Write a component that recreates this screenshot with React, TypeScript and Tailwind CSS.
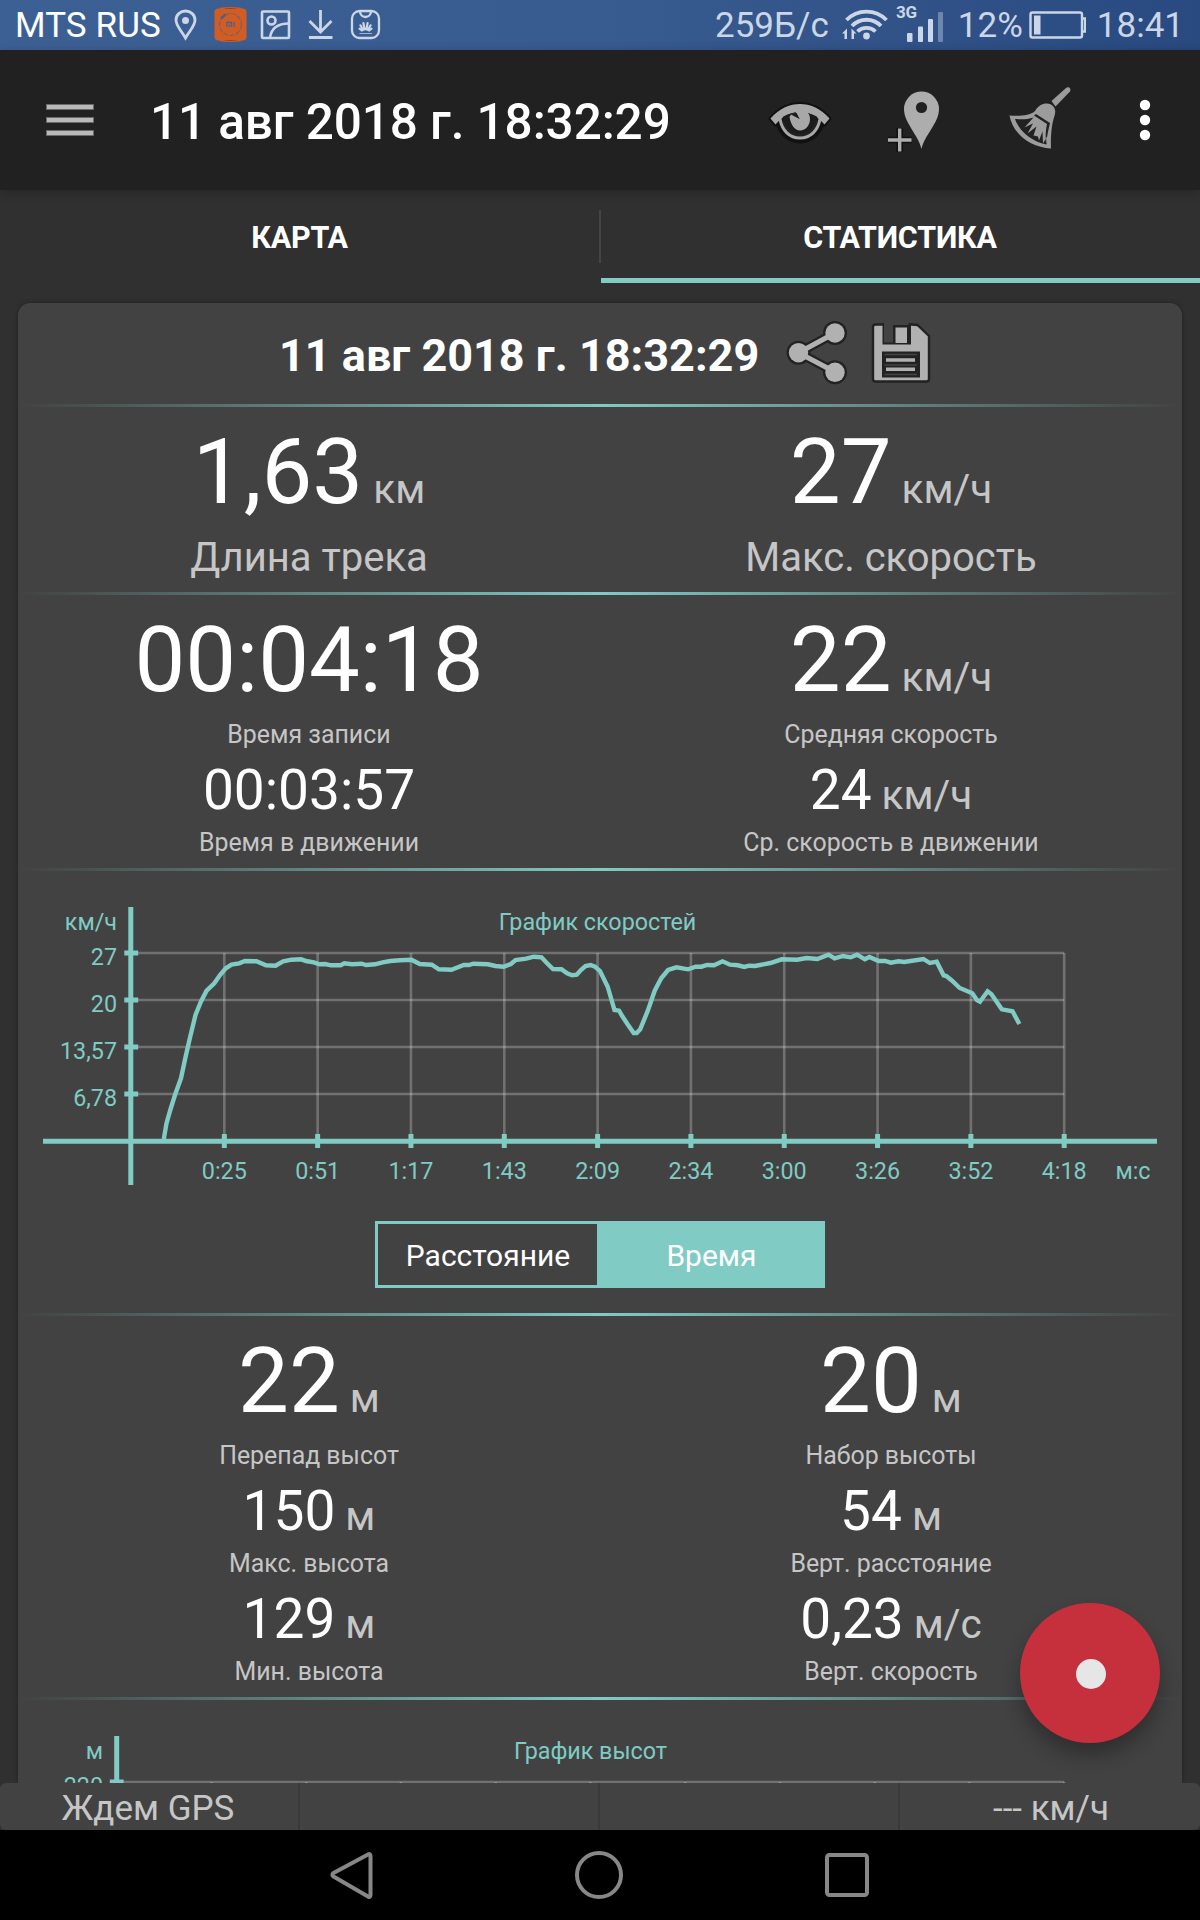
import type { ReactNode } from 'react';

const TEAL = '#80cbc4';

// Speed line, [x, y] in chart units
const speedLine: [number, number][] = [
  [163.8, 249], [166.5, 233.3], [170.3, 220], [175.3, 204], [181, 188.3], [185.6, 166.7], [190.2, 146.7],
  [195.5, 125], [200.9, 111.7], [206.6, 100.7], [214.3, 93.3], [220, 85], [225.8, 78.3], [231.5, 74.7],
  [239.2, 73.3], [244.9, 71], [256.4, 71.3], [266, 75.3], [275.5, 75.7], [283.2, 71.3], [291.6, 69.7],
  [301.2, 69.3], [306.1, 71], [313.8, 72.3], [319.5, 74.3], [325.3, 74], [331, 75.3], [340.6, 75.3],
  [344.4, 73.3], [352, 74.3], [361.6, 73.7], [366.2, 75], [375, 74.3], [382.7, 72.3], [390.3, 71],
  [399.9, 70.3], [411.4, 69.7], [419.8, 74], [431.7, 74.7], [438.9, 79.3], [451.5, 79.7], [463.8, 75],
  [468.8, 75], [473.4, 73.7], [487.9, 74.3], [495.5, 76], [503.6, 76.7], [510.9, 74], [515.5, 70],
  [526.2, 68.7], [533.8, 66.7], [541.5, 67.3], [546.1, 72.3], [553, 79], [561.4, 79.3], [567.1, 83.3],
  [572.1, 85.3], [576.7, 84.7], [580.9, 80], [585.5, 76], [590.5, 75], [595, 76.7], [600, 81],
  [607.7, 96.7], [614.5, 120], [619.1, 120.7], [622.2, 126], [627.6, 134.3], [633.7, 143], [636.7, 143],
  [640.2, 139.3], [647.8, 120.7], [654.7, 100.7], [661.2, 88.3], [668.1, 80], [676.5, 77.3], [688, 79.3],
  [695.7, 76.7], [701.4, 76.7], [707.1, 75], [714, 75.3], [722.5, 71.3], [730.1, 74.7], [737.8, 75.3],
  [744.3, 77], [749.2, 75.7], [755, 76], [770.3, 73], [781.8, 69.3], [797.1, 69.7], [806.6, 68],
  [817.4, 69], [828.5, 64.7], [834.6, 68.3], [843, 66], [850.7, 67.3], [857.2, 64.7], [864.8, 69.3],
  [869.4, 67], [878.6, 71], [885.1, 71], [890.8, 72.7], [898.5, 71.3], [904.2, 72], [923.4, 69],
  [929.9, 73], [936.7, 71.7], [943.6, 85.3], [946.3, 86], [952.1, 90.7], [959.7, 98], [972.3, 103.3],
  [976.9, 110], [980, 111.7], [987.6, 101.3], [991.5, 104.3], [1001.8, 119.3], [1012.5, 121.3], [1019.4, 134],
];

const speedX = ['0:25', '0:51', '1:17', '1:43', '2:09', '2:34', '3:00', '3:26', '3:52', '4:18'];
const speedY = ['27', '20', '13,57', '6,78'];

function StatusBar() {
  return (
    <div className="flex h-[50px] shrink-0 items-center whitespace-nowrap bg-linear-to-r from-[#3d6094] via-[#385b90] to-[#294a80] text-[35px] leading-[50px] text-[#cbd6e6]">
      <span className="ml-[15px] w-[157px] pt-[2px] tracking-[0.1px] text-white">MTS RUS</span>
      <svg width="28" height="50" viewBox="172 0 28 50" fill="none" stroke="currentColor" strokeWidth="2.8">
        <path d="M185.500 38C181 30 176 26 176 20a9.500 9 0 0 1 19 0c0 6-5 10-9.500 18z" />
        <circle cx="185.500" cy="20.500" r="3.500" fill="currentColor" stroke="none" />
      </svg>
      <svg className="ml-[12px]" width="36" height="50" viewBox="212 0 36 50">
        <rect x="214.500" y="8.500" width="32" height="32" rx="4" fill="#d15d25" />
        <path d="M220 8.500Q230.500 7 241 8.500M220 40.500Q230.500 42 241 40.500" stroke="#d15d25" strokeWidth="1.500" />
        <circle cx="230.500" cy="24.500" r="11" fill="none" stroke="#7a5f61" strokeWidth="1.200" strokeDasharray="5 1.500" />
        <path d="M221 18.500l4.500-4" stroke="#4a6190" strokeWidth="2.400" />
        <path d="M227 27v-4.500h4.500V27M229.300 24.500V27M234 22v5" fill="none" stroke="#4a6190" strokeWidth="1.300" />
      </svg>
      <svg className="ml-[12px]" width="32" height="50" viewBox="260 0 32 50" fill="none" stroke="currentColor" strokeWidth="2.600">
        <rect x="262" y="11.500" width="27" height="26.500" rx="1" />
        <circle cx="271.500" cy="20.500" r="4" />
        <path d="M270 38c1-9 7-14.500 19-14.500" />
      </svg>
      <svg className="ml-[15px]" width="28" height="50" viewBox="307 0 28 50" fill="none" stroke="currentColor" strokeWidth="2.800">
        <path d="M320.500 10v21M309.500 21l11 11 11-11M309 37.500h23.500" />
      </svg>
      <svg className="ml-[14px]" width="34" height="50" viewBox="349 0 34 50" fill="none" stroke="currentColor" strokeWidth="2.300">
        <rect x="352" y="11" width="27" height="27" rx="7.500" />
        <path d="M360 11c0 8 11 8 11 0" />
        <g strokeWidth="2.200" strokeLinecap="round">
          <path d="M364.600 29.500l-1.200-6.500M366.400 29.500l1.200-6.500M363 29.800l-2.600-4.500M368 29.800l2.600-4.500M361.800 30.500l-2.300-1.800M369.200 30.500l2.300-1.800" />
        </g>
        <path d="M359.500 33.500h12.500" strokeWidth="1" opacity=".7" />
      </svg>

      <span className="ml-auto pt-[2px]">259Б/с</span>
      <svg className="ml-[12px]" width="48" height="50" viewBox="840 0 48 50" fill="none" stroke="currentColor" strokeWidth="3.800">
        <path d="M845.500 20a28 28 0 0 1 40 0" />
        <path d="M851 26a20 20 0 0 1 29 0" />
        <path d="M856.500 31.500a13 13 0 0 1 18 0" />
        <circle cx="865.500" cy="36" r="3.400" fill="currentColor" stroke="none" />
        <path d="M841 33.500l5-5v10.500h-2.500V33.500zM855.500 33.500l-5-5v10.500h2.500V33.500z" fill="currentColor" stroke="none" />
      </svg>
      <svg className="ml-[5px]" width="50" height="50" viewBox="894 0 50 50" fill="currentColor">
        <text x="896" y="17.500" fontSize="17" fontWeight="700" textLength="21">3G</text>
        <rect x="907" y="33" width="5.500" height="9" rx="1" />
        <rect x="918" y="26.500" width="5" height="15.500" rx="1" />
        <rect x="928" y="19" width="5" height="23" rx="1" />
        <rect x="938" y="12" width="5" height="30" rx="1" opacity=".4" />
      </svg>
      <span className="ml-[14px] pt-[2px]">12%</span>
      <svg className="ml-[5px]" width="58" height="50" viewBox="1028 0 58 50" fill="none" stroke="currentColor" strokeWidth="2.400">
        <rect x="1030.500" y="12.500" width="51.500" height="25" rx="2" />
        <rect x="1034" y="15.500" width="6.500" height="19" fill="currentColor" stroke="none" />
        <path d="M1083 18.500h2v13h-2" />
      </svg>
      <span className="mr-[16px] ml-[11px] pt-[2px]">18:41</span>
    </div>
  );
}

function AppBar() {
  return (
    <div className="relative z-10 flex h-[140px] shrink-0 items-center bg-[#212121] shadow-[0_2px_10px_rgba(0,0,0,0.25)]">
      <svg className="ml-[46px]" width="48" height="34" viewBox="0 0 48 34" fill="#b9b9b9" stroke="#6c6c6c" strokeWidth=".8">
        <rect x=".5" y="1.500" width="47" height="5" />
        <rect x=".5" y="14.500" width="47" height="5" />
        <rect x=".5" y="27.500" width="47" height="5" />
      </svg>
      <h1 className="mt-[4px] ml-[56px] whitespace-nowrap text-[49.500px] font-medium leading-[60px] tracking-[-0.1px] text-white">11 авг 2018 г. 18:32:29</h1>
      <div className="ml-auto flex">
        <svg width="66" height="80" viewBox="767 80 66 80">
          <g stroke="#111" strokeWidth="4" strokeLinejoin="round">
            <path d="M770.500 118.500C780 108 790 104 800 104s20 4 29.500 14.500l-5 6C817 116 809 112 800 112s-17 4-24.500 12.500z" fill="#a8a8a8" />
            <path d="M778 120c3 12 11 20 22 20s19-8 22-20" fill="none" strokeWidth="7" />
          </g>
          <path d="M770.500 118.500C780 108 790 104 800 104s20 4 29.500 14.500l-5 6C817 116 809 112 800 112s-17 4-24.500 12.500z" fill="#a8a8a8" />
          <path d="M780 119c2 11.500 9.500 19 20 19s18-7.500 20-19" fill="none" stroke="#a8a8a8" strokeWidth="3" />
          <path d="M782.500 117c3 10 8 16.500 17.500 16.500s14.500-6.500 17.500-16.500c-10-6.500-25-6.500-35 0z" fill="#1b1b1b" />
          <path d="M800 119.500l-4.500-5.500c-3-1-5 .5-6 3 1.500 8 5 13.500 10.500 13.500 6 0 10-5.500 10-11.500s-3-8-10-8c-2 0-3.500.5-4.500 1z" fill="#a8a8a8" />
          <path d="M791 114.500l8.500 4.500-3-6z" fill="#1b1b1b" />
        </svg>
        <svg className="ml-[53px]" width="56" height="80" viewBox="886 80 56 80">
          <path d="M921.500 149c-3-14-17.500-26-17.500-40a17.500 17.500 0 0 1 35 0c0 14-14.500 26-17.500 40z" fill="#adadad" />
          <circle cx="921.500" cy="107.500" r="5.600" fill="#212121" />
          <path d="M888 140h23.500M899.700 128v24" stroke="#111" strokeWidth="6.500" />
          <path d="M888 140h23.500M899.700 128.500v23" stroke="#adadad" strokeWidth="3.400" />
        </svg>
        <svg className="ml-[66px]" width="66" height="80" viewBox="1008 80 66 80" fill="#9c9c9c">
          <path d="M1051.500 101l14.500-13c2.500-2 5.500.5 4 3.500l-14.500 15z" />
          <path d="M1035 111c4-7 11-9 16-6.500 5 3 5 8 3 13-2 6-3.500 18-3 31-20-1-38-14-41.500-33 10 1 21 0 25.500-4.500zM1015 119c4 12 17 23 31.500 25.500l.5-8-4 7-.5-12-3.500 9-1-4-4.500-1 3-9-9 7 5.500-10-8.500 4 9-10c-6 2-12 2-18.500 1.500zM1034 115.500l13 8.500c-1.500 7-1.500 13-1 20 1-8 2.500-15 4-21l-14-9z" fillRule="evenodd" />
        </svg>
        <svg className="mr-[47px] ml-[63px]" width="16" height="80" viewBox="1137 80 16 80" fill="#fff">
          <circle cx="1145" cy="105" r="5.200" />
          <circle cx="1145" cy="120" r="5.200" />
          <circle cx="1145" cy="135" r="5.200" />
        </svg>
      </div>
    </div>
  );
}

function Tabs() {
  return (
    <div className="flex h-[93px] shrink-0 text-[30.500px] font-bold leading-[37px] tracking-[-0.2px] text-white">
      <div className="flex w-[601px] items-start">
        <span className="w-[599px] pt-[29px] text-center">КАРТА</span>
        <span className="mt-[20px] h-[53px] w-[2px] bg-[#444]" />
      </div>
      <div className="flex-1 border-b-[5px] border-[#80cbc4] pt-[29px] pr-px text-center">СТАТИСТИКА</div>
    </div>
  );
}

function Divider() {
  return <div className="h-[3px] shrink-0 bg-linear-to-r from-transparent via-[#80cbc4] to-transparent" />;
}

function Unit({ children }: { children: ReactNode }) {
  return <span className="whitespace-pre text-[40.500px] leading-none text-[#c6c6c6]"> {children}</span>;
}

function BigStat({ value, unit, label, large }: { value: string; unit?: string; label: string; large?: boolean }) {
  return (
    <div className="text-center">
      <div className="mt-[13px] h-[105px] text-[90.500px] leading-[105px] text-white">
        {value}
        {unit && <Unit>{unit}</Unit>}
      </div>
      {large ? (
        <div className="mt-[9px] text-[40px] leading-[47px] text-[#c6c6c6]">{label}</div>
      ) : (
        <div className="mt-[7px] text-[24.900px] leading-[29px] text-[#c6c6c6]">{label}</div>
      )}
    </div>
  );
}

function SmallStat({ value, unit, label }: { value: string; unit?: string; label: string }) {
  return (
    <div className="text-center">
      <div className="mt-[9px] h-[64px] text-[55px] leading-[64px] text-white">
        {value}
        {unit && <Unit>{unit}</Unit>}
      </div>
      <div className="mt-[6px] text-[24.900px] leading-[29px] text-[#c6c6c6]">{label}</div>
    </div>
  );
}

function SpeedChart() {
  const xs = speedX.map((_, i) => 131 + (i + 1) * 93.32);
  const ys = speedY.map((_, i) => 63 + i * 47);
  return (
    <svg className="shrink-0" width="1164" height="350" viewBox="18 -19 1164 350" fontSize="23.300" fill={TEAL}>
      <g stroke="#fff" strokeOpacity=".25" strokeWidth="2.600">
        {ys.map((y) => <path key={y} d={`M131 ${y}H1064.200`} />)}
        {xs.map((x) => <path key={x} d={`M${x} 63V251`} />)}
      </g>
      <g stroke={TEAL} strokeWidth="5">
        <path d="M130.800 17V295M43 251.200H1157" />
        {ys.map((y) => <path key={y} d={`M124.300 ${y}H138.200`} />)}
        {xs.map((x) => <path key={x} d={`M${x} 244V258`} />)}
      </g>
      <polyline points={speedLine.map((p) => p.join(',')).join(' ')} fill="none" stroke={TEAL} strokeWidth="4.400" />
      <text x="117" y="39.700" textAnchor="end">км/ч</text>
      <text x="597.500" y="39.700" textAnchor="middle">График скоростей</text>
      {speedY.map((label, i) => (
        <text key={label} x="117" y={ys[i] + 12} textAnchor="end">{label}</text>
      ))}
      {speedX.map((label, i) => (
        <text key={label} x={xs[i]} y="288.700" textAnchor="middle">{label}</text>
      ))}
      <text x="1133" y="288.700" textAnchor="middle">м:с</text>
    </svg>
  );
}

// Only the top of this chart is visible above the GPS bar
function AltitudeChart() {
  const xs = Array.from({ length: 10 }, (_, i) => 116.7 + (i + 1) * 94.75);
  return (
    <svg className="shrink-0" width="1164" height="83" viewBox="18 0 1164 83" fontSize="23.300" fill={TEAL}>
      <g stroke="#fff" strokeOpacity=".25" strokeWidth="2.600">
        <path d="M117 82H1064.200" />
        {xs.map((x) => <path key={x} d={`M${x} 82V270`} />)}
      </g>
      <path d="M116.700 36V300M109.800 82H123.600" stroke={TEAL} strokeWidth="5" />
      <text x="103" y="59" textAnchor="end">м</text>
      <text x="590.500" y="59" textAnchor="middle">График высот</text>
      <text x="103" y="94" textAnchor="end">220</text>
    </svg>
  );
}

function CardHeader() {
  return (
    <div className="flex h-[101px] shrink-0 items-start">
      <h2 className="mt-[26px] ml-[261px] w-[485px] whitespace-nowrap text-[45px] font-bold leading-[53px] text-white">11 авг 2018 г. 18:32:29</h2>
      <svg className="mt-[17px] ml-[22px]" width="62" height="68" viewBox="786 320 62 68">
        <g fill="#222" stroke="#222" strokeWidth="9.500">
          <path d="M835 333L798.500 352.700L835 372" fill="none" />
          <g stroke="none">
            <circle cx="835" cy="333" r="12" />
            <circle cx="798.500" cy="352.700" r="12" />
            <circle cx="835" cy="372.300" r="12" />
          </g>
        </g>
        <g fill="#b1b1b1">
          <path d="M835 333L798.500 352.700L835 372" fill="none" stroke="#b1b1b1" strokeWidth="5" />
          <circle cx="835" cy="333" r="9.700" />
          <circle cx="798.500" cy="352.700" r="9.700" />
          <circle cx="835" cy="372.300" r="9.700" />
        </g>
      </svg>
      <svg className="mt-[17px] ml-[21px]" width="64" height="68" viewBox="869 320 64 68">
        <path d="M875 324.500H911.500L917.500 325L929 336V379q0 2.500-2.500 2.500H875.500q-2.500 0-2.500-2.500V327q0-2.500 2.500-2.500z" fill="#b1b1b1" stroke="#222" strokeWidth="2.400" />
        <path d="M882.500 323H911V344.500H882.500z" fill="#222" />
        <path d="M884 322H893V342.500H884z" fill="#424242" />
        <path d="M895.500 327.500H907V343H895.500z" fill="#b1b1b1" />
        <path d="M884 322.500H908.500V325H884z" fill="#424242" />
        <path d="M882 351.500H920V377.500H882z" fill="#222" />
        <path d="M884.500 354.500H917M884.500 365H917M884.500 374.500H917" stroke="#444" strokeWidth="1.500" />
        <path d="M886 360H915M886 369.200H915" stroke="#b1b1b1" strokeWidth="3.600" />
      </svg>
    </div>
  );
}

function StatsCard() {
  return (
    <div className="mx-[18px] mt-[20px] flex h-[1480px] shrink-0 flex-col overflow-hidden rounded-t-[12px] bg-[#424242] shadow-[0_0_4px_rgba(0,0,0,0.35)]">
      <CardHeader />
      <Divider />
      <div className="grid h-[185px] shrink-0 grid-cols-2">
        <BigStat value="1,63" unit="км" label="Длина трека" large />
        <BigStat value="27" unit="км/ч" label="Макс. скорость" large />
      </div>
      <Divider />
      <div className="grid h-[273px] shrink-0 grid-cols-2">
        <div>
          <BigStat value="00:04:18" label="Время записи" />
          <SmallStat value="00:03:57" label="Время в движении" />
        </div>
        <div>
          <BigStat value="22" unit="км/ч" label="Средняя скорость" />
          <SmallStat value="24" unit="км/ч" label="Ср. скорость в движении" />
        </div>
      </div>
      <Divider />
      <SpeedChart />
      <div className="mx-auto mb-[25px] flex h-[67px] w-[450px] shrink-0 border-[3px] border-[#80cbc4] text-center text-[30px] leading-[63px] text-white">
        <div className="w-[219px] pl-px">Расстояние</div>
        <div className="flex-1 bg-[#80cbc4] pl-[4px]">Время</div>
      </div>
      <Divider />
      <div className="grid h-[381px] shrink-0 grid-cols-2">
        <div>
          <BigStat value="22" unit="м" label="Перепад высот" />
          <SmallStat value="150" unit="м" label="Макс. высота" />
          <SmallStat value="129" unit="м" label="Мин. высота" />
        </div>
        <div>
          <BigStat value="20" unit="м" label="Набор высоты" />
          <SmallStat value="54" unit="м" label="Верт. расстояние" />
          <SmallStat value="0,23" unit="м/с" label="Верт. скорость" />
        </div>
      </div>
      <Divider />
      <AltitudeChart />
    </div>
  );
}

function GpsBar() {
  return (
    <div className="relative z-10 grid h-[47px] shrink-0 grid-cols-4 rounded-[6px] bg-[#424242] text-center text-[35px] leading-[51px] text-[#c6c6c6]">
      <div className="border-r-2 border-[#3a3a3a] pr-[2px]">Ждем GPS</div>
      <div className="border-r-2 border-[#3a3a3a]" />
      <div className="border-r-2 border-[#3a3a3a]" />
      <div className="pl-[2px]">--- км/ч</div>
    </div>
  );
}

function NavBar() {
  return (
    <div className="relative z-10 flex h-[90px] shrink-0 items-start bg-black pt-[20px]">
      <svg className="ml-[328px]" width="46" height="50" viewBox="328 1850 46 50" fill="none" stroke="#878787" strokeWidth="4" strokeLinejoin="round">
        <path d="M368 1854.500c1.500-1 2.500-.5 2.500 1.500v39c0 2-1 2.500-2.500 1.500l-34.500-20c-1.500-1-1.500-2.500 0-3.500z" />
      </svg>
      <svg className="ml-[200px]" width="50" height="50" viewBox="574 1850 50 50" fill="none" stroke="#878787" strokeWidth="4">
        <circle cx="599" cy="1875" r="22" />
      </svg>
      <svg className="ml-[199px]" width="48" height="50" viewBox="823 1850 48 50" fill="none" stroke="#878787" strokeWidth="4">
        <rect x="827" y="1855" width="40" height="40" rx="2.500" />
      </svg>
    </div>
  );
}

export default function App() {
  return (
    <div className="relative flex h-[1920px] w-[1200px] flex-col overflow-hidden bg-[#303030] font-['Roboto','Noto_Sans',sans-serif]">
      <StatusBar />
      <AppBar />
      <Tabs />
      <StatsCard />
      <GpsBar />
      <NavBar />
      <button className="absolute top-[1603px] left-[1020px] z-20 flex h-[140px] w-[140px] items-center justify-center rounded-full bg-[#c5303c] shadow-[0_12px_20px_rgba(0,0,0,0.3)]">
        <span className="mt-[2px] ml-[2px] h-[30px] w-[30px] rounded-full bg-[#e6e6e6]" />
      </button>
    </div>
  );
}
